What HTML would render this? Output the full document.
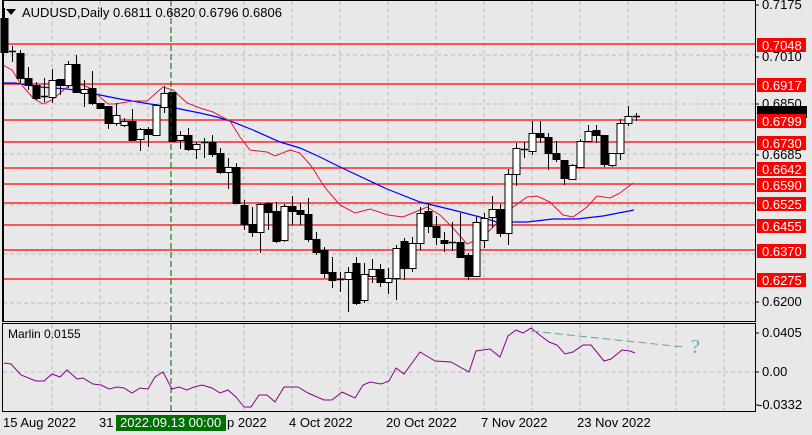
<!DOCTYPE html><html><head><meta charset="utf-8"><style>
body{margin:0;width:812px;height:435px;background:#e8e8e8;overflow:hidden;font-family:"Liberation Sans",sans-serif}
svg{position:absolute;left:0;top:0}
</style></head><body>
<svg id="s" width="812" height="435" xmlns="http://www.w3.org/2000/svg" font-family="Liberation Sans, sans-serif">
<rect width="812" height="435" fill="#e8e8e8"/>
<g id="grid" stroke="#bdbdbd" stroke-dasharray="4,3" stroke-width="1"></g>
<g id="hl" stroke="#ff0000" stroke-width="1.3"></g>
<polyline fill="none" stroke="#0000ff" stroke-width="1.2" points="3,83 15,83 40,87 67,89 87,92 100,95 120,99 150,104 170,107 200,113 217,117 233,122 253,130 280,142 300,148 320,157 340,167 387,189 420,202 453,210 480,217 497,222 527,222 553,219 577,219 603,216 634,210"/>
<polyline fill="none" stroke="#e8103c" stroke-width="1" points="3,65 12,70 20,83 33,98 43,104 52,100 60,93 70,85 80,84 90,88 100,97 108,104 115,104 133,101 147,101 163,87 173,90 187,103 200,108 213,112 230,121 240,137 250,150 267,152 275,156 290,150 300,153 312,167 322,183 327,190 340,205 355,213 370,209 388,215 403,217 420,210 427,207 440,215 453,228 467,244 483,237 500,220 513,207 527,197 537,196 550,202 563,215 573,217 587,207 597,196 610,198 620,193 633,183"/>
<g id="c"></g>
<line x1="171" y1="0" x2="171" y2="412" stroke="#006400" stroke-dasharray="6,3" stroke-width="1"/>
<rect x="2.5" y="0.5" width="753" height="321" fill="none" stroke="#000"/>
<rect x="2.5" y="323.5" width="753" height="88" fill="none" stroke="#000"/>
<line x1="3" y1="0" x2="3" y2="321" stroke="#000" stroke-width="2"/>
<polyline fill="none" stroke="#8b008b" stroke-width="1" points="4,363 11,364 21,375 36,381 44,381 52,374 60,377 67,370 77,379 83,378 93,384 101,385 109,389 117,387 124,388 132,393 140,388 148,389 155,377 163,372 172,389 179,387 187,390 194,387 202,385 212,388 220,393 228,390 236,397 244,407 251,407 259,395 267,395 275,402 284,387 298,387 308,393 324,400 332,400 342,392 355,398 363,385 370,382 381,384 389,381 396,368 404,374 420,352 435,361 451,362 469,372 476,351 490,349 500,357 508,336 516,330 523,333 531,328 541,336 549,342 557,345 565,354 573,352 583,345 591,345 604,361 611,359 622,350 630,351 635,353"/>
<line x1="531" y1="331" x2="684" y2="347" stroke="#5fa0a0" stroke-dasharray="8,4" stroke-width="1"/>
<text x="691" y="353" font-family="Liberation Serif, serif" font-size="20" fill="#6aa8b8">?</text>
<path d="M6 9 L16 9 L11 15Z" fill="#000"/>
<text x="22" y="17" font-size="13" fill="#000">AUDUSD,Daily  0.6811 0.6820 0.6796 0.6806</text>
<text x="8" y="338" font-size="12" fill="#000">Marlin 0.0155</text>
<g id="ax" font-size="13" fill="#000"></g>
<rect x="116" y="415" width="110" height="16" fill="#007000"/>
<text x="120" y="427" font-size="13" fill="#fff">2022.09.13 00:00</text>
<g font-size="13" fill="#000">
<text x="3" y="427">15 Aug 2022</text><text x="99" y="427">31</text><text x="227" y="427">p 2022</text>
<text x="289" y="427">4 Oct 2022</text><text x="386" y="427">20 Oct 2022</text><text x="481" y="427">7 Nov 2022</text><text x="577" y="427">23 Nov 2022</text>
</g>
</svg>
<script>
var NS="http://www.w3.org/2000/svg";
function el(p,t,a,tx){var e=document.createElementNS(NS,t);for(var k in a)e.setAttribute(k,a[k]);if(tx)e.textContent=tx;document.getElementById(p).appendChild(e);}
[52,100,148,196,244,292,340,388,436,484,532,580,628,676,724].forEach(function(x){el("grid","line",{x1:x,y1:1,x2:x,y2:321});el("grid","line",{x1:x,y1:324,x2:x,y2:411});});
[55,104,154,205,254,303].forEach(function(y){el("grid","line",{x1:3,y1:y,x2:755,y2:y});});
el("grid","line",{x1:3,y1:372,x2:755,y2:372});
[44,84,120,142,168,184,203,225,250,279].forEach(function(y){el("hl","line",{x1:3,y1:y,x2:755,y2:y});});
// [top,bottom,white?,high,low]
var d=[[18,52,0,8,52],[51,53,1,46,62],[53,78,0,50,83],[78,85,0,67,90],[85,98,0,82,100],[96,98,0,78,102],[80,97,1,69,103],[79,85,0,79,95],[64,85,1,61,88],[64,92,0,55,93],[89,93,1,80,107],[88,103,0,71,105],[103,108,0,103,108],[106,123,0,106,129],[115,123,1,103,126],[121,125,1,118,127],[121,140,0,109,141],[129,139,1,128,151],[129,134,0,127,147],[105,135,1,104,136],[93,107,1,86,113],[92,141,0,92,141],[135,140,1,131,149],[135,149,0,128,151],[144,149,1,142,159],[142,144,1,138,158],[142,154,0,135,157],[153,172,0,148,174],[167,172,1,158,189],[167,203,0,163,203],[205,224,0,200,230],[224,232,0,207,237],[204,232,1,203,253],[203,212,0,202,230],[211,241,0,202,243],[206,240,1,204,242],[206,211,0,196,225],[210,214,0,203,225],[214,239,0,198,242],[239,252,0,232,255],[250,273,0,247,278],[272,280,0,257,288],[279,281,0,272,292],[272,279,1,267,312],[263,303,0,257,305],[274,300,1,263,303],[269,276,1,259,283],[269,282,0,264,287],[278,282,1,268,294],[248,278,1,245,300],[241,268,0,238,280],[243,268,1,237,272],[213,243,1,207,250],[211,226,0,204,233],[226,237,0,216,245],[240,243,0,232,252],[242,244,0,222,251],[242,257,0,213,257],[255,276,0,253,280],[222,276,1,217,277],[218,240,1,213,248],[209,217,1,196,228],[209,233,0,204,237],[174,233,1,169,245],[148,174,1,143,186],[149,150,1,142,158],[133,151,1,121,155],[133,137,0,121,143],[137,153,0,133,170],[153,159,0,141,162],[160,178,0,160,185],[165,179,1,164,180],[141,167,1,139,168],[131,141,1,125,142],[130,135,0,125,143],[135,164,0,135,167],[153,165,1,153,167],[123,153,1,119,160],[116,123,1,106,126],[116,117,1,113,121]];
d.forEach(function(c,i){var x=4+8*i;el("c","line",{x1:x+.5,y1:c[3],x2:x+.5,y2:c[4],stroke:"#000"});
var h=Math.max(c[1]-c[0],1);if(h<=2){el("c","line",{x1:x-3,y1:c[0]+.5,x2:x+4,y2:c[0]+.5,stroke:"#000","stroke-width":1.5});}
else el("c","rect",{x:x-3,y:c[0]+.5,width:7,height:h,fill:c[2]?"#fff":"#000",stroke:"#000"});});
[["0.7175",9],["0.7010",61],["0.6850",108],["0.6685",159],["0.6200",306],["0.0405",337],["0.00",376],["-0.0332",409]].forEach(function(a){el("ax","text",{x:a[0][0]=="-"?758:762,y:a[1]},a[0]);el("ax","line",{x1:755,y1:a[1]-4,x2:759,y2:a[1]-4,stroke:"#000"});});
el("ax","rect",{x:757,y:106,width:50,height:12,fill:"#000"});
[["0.7048",44],["0.6917",84],["0.6799",120],["0.6730",142],["0.6642",168],["0.6590",184],["0.6525",203],["0.6455",225],["0.6370",250],["0.6275",279]].forEach(function(a){el("ax","rect",{x:757,y:a[1]-6,width:49,height:14,fill:"#ff0000"});el("ax","text",{x:762,y:a[1]+6,fill:"#fff"},a[0]);});
</script>
</body></html>
